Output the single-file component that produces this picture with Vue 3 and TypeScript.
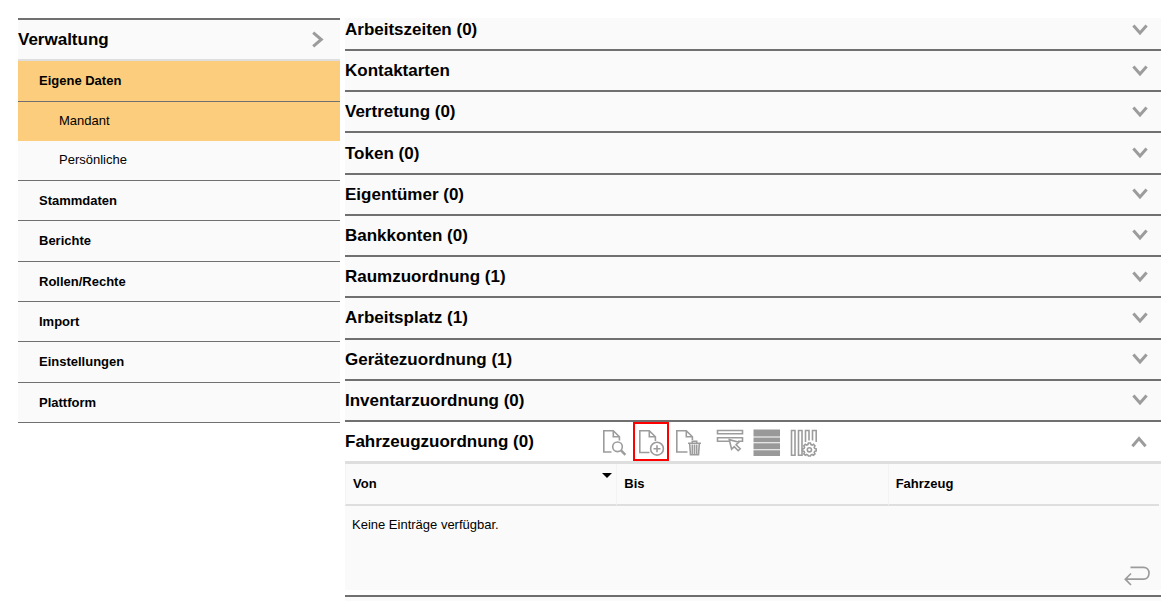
<script setup lang="ts">
import { ref } from 'vue'

interface Section {
  title: string
  count?: number
}

const subItems: string[] = ['Mandant', 'Persönliche']
const activeSub = ref('Mandant')

const navItems: string[] = [
  'Stammdaten',
  'Berichte',
  'Rollen/Rechte',
  'Import',
  'Einstellungen',
  'Plattform',
]

const firstSection: Section = { title: 'Arbeitszeiten', count: 0 }

const sections: Section[] = [
  { title: 'Kontaktarten' },
  { title: 'Vertretung', count: 0 },
  { title: 'Token', count: 0 },
  { title: 'Eigentümer', count: 0 },
  { title: 'Bankkonten', count: 0 },
  { title: 'Raumzuordnung', count: 1 },
  { title: 'Arbeitsplatz', count: 1 },
  { title: 'Gerätezuordnung', count: 1 },
  { title: 'Inventarzuordnung', count: 0 },
]

const label = (s: Section): string =>
  s.count === undefined ? s.title : `${s.title} (${s.count})`
</script>

<template>
  <div class="page">
    <nav class="sidebar" aria-label="Verwaltung">
      <button class="sidebar-head" type="button">
        <span>Verwaltung</span>
        <svg class="chevron-right" width="12" height="17" viewBox="0 0 12 17" aria-hidden="true">
          <path d="M1.2 1.6L9.3 8.5L1.2 15.4" />
        </svg>
      </button>
      <a class="nav-link active" href="#eigene-daten">Eigene Daten</a>
      <div class="sub">
        <a
          v-for="item in subItems"
          :key="item"
          class="sub-link"
          :class="{ active: item === activeSub }"
          href="#"
          @click.prevent="activeSub = item"
        >{{ item }}</a>
      </div>
      <div class="nav-list">
        <a v-for="item in navItems" :key="item" class="nav-link" href="#">{{ item }}</a>
      </div>
    </nav>

    <main class="content">
      <button class="section first" type="button">
        <span>{{ label(firstSection) }}</span>
        <svg class="chevron" width="16" height="12" viewBox="0 0 16 12" aria-hidden="true">
          <path d="M1.4 1.4L8 9L14.6 1.4" />
        </svg>
      </button>
      <div class="section-list">
        <button v-for="s in sections" :key="s.title" class="section" type="button">
          <span>{{ label(s) }}</span>
          <svg class="chevron" width="16" height="12" viewBox="0 0 16 12" aria-hidden="true">
            <path d="M1.4 1.4L8 9L14.6 1.4" />
          </svg>
        </button>
      </div>

      <section class="panel">
        <header class="panel-head">
          <h2>Fahrzeugzuordnung (0)</h2>
          <div class="toolbar">
            <div class="tool-group">
              <button class="tool" type="button" aria-label="Anzeigen">
                <svg width="36" height="39" viewBox="0 0 36 39">
                  <path d="M15.5 30H7.8V8.8H17.3L23.4 14.8V18.5M17.3 8.8V14.8H23.4" />
                  <circle cx="21.5" cy="24.8" r="4.8" />
                  <path class="thick" d="M25 28.4L29.4 32.8" />
                </svg>
              </button>
              <button class="tool marked" type="button" aria-label="Neu">
                <svg width="36" height="39" viewBox="0 0 36 39">
                  <path d="M16.5 30.5H6.8V8.8H16.3L22.4 14.8V19M16.3 8.8V14.8H22.4" />
                  <circle cx="24" cy="26.7" r="6.4" />
                  <path d="M24 23.2V30.2M20.5 26.7H27.5" />
                </svg>
              </button>
              <button class="tool" type="button" aria-label="Löschen">
                <svg width="36" height="39" viewBox="0 0 36 39">
                  <path d="M17.5 30H6.8V8.8H16.3L22.4 14.8V18M16.3 8.8V14.8H22.4" />
                  <path d="M18 21.3H31M22.3 21V19.3H26.7V21M19.7 22L20.5 32.8H28.5L29.3 22" />
                  <path d="M22.3 22.5V32M24.5 22.5V32M26.7 22.5V32" />
                </svg>
              </button>
            </div>
            <div class="tool-group">
              <button class="tool" type="button" aria-label="Auswählen">
                <svg width="36" height="39" viewBox="0 0 36 39">
                  <path d="M5.5 8.5H30.5V11.7H5.5ZM17.5 19.3H5.5V15.7H30.5V19.3H26" />
                  <path d="M17.3 17.7L19.6 27.2L22.2 24.6L26.2 28.7L28.2 26.7L24.1 22.7L26.8 20.2Z" />
                </svg>
              </button>
              <button class="tool" type="button" aria-label="Zeilen">
                <svg class="solid" width="36" height="39" viewBox="0 0 36 39">
                  <path d="M4.5 7.5H31V14.6H4.5ZM4.5 15.6H31V20.2H4.5ZM4.5 21.2H31V27.2H4.5ZM4.5 28.2H31V34H4.5Z" />
                </svg>
              </button>
              <button class="tool" type="button" aria-label="Spalten">
                <svg width="36" height="39" viewBox="0 0 36 39">
                  <path d="M5.5 8.5H9V33.2H5.5ZM12.5 8.5H16V33.2H12.5ZM19.5 20V8.5H23V18.5M26.5 18.5V8.5H30.2V20" />
                  <path d="M22.4 21H24.4L24.9 22.6L26.1 23.1L27.5 22.3L29 23.8L28.2 25.2L28.7 26.4L30.2 26.9V28.9L28.7 29.4L28.2 30.6L29 31.9L27.5 33.3L26.1 32.5L24.9 33L24.4 34H22.4L21.9 33L20.7 32.5L19.3 33.3L17.8 31.9L18.6 30.6L18.1 29.4L16.6 28.9V26.9L18.1 26.4L18.6 25.2L17.8 23.8L19.3 22.3L20.7 23.1L21.9 22.6Z" />
                  <circle cx="23.4" cy="27.8" r="2.1" />
                </svg>
              </button>
            </div>
          </div>
          <button class="toggle" type="button" aria-label="Zuklappen">
            <svg class="chevron" width="16" height="12" viewBox="0 0 16 12" aria-hidden="true">
              <path d="M1.4 10.2L8 2.6L14.6 10.2" />
            </svg>
          </button>
        </header>

        <div class="panel-body">
          <table>
            <thead>
              <tr>
                <th scope="col" aria-sort="descending">Von<span class="sort"></span></th>
                <th scope="col">Bis</th>
                <th scope="col">Fahrzeug</th>
              </tr>
            </thead>
            <tbody>
              <tr>
                <td colspan="3">Keine Einträge verfügbar.</td>
              </tr>
            </tbody>
          </table>
          <button class="back" type="button" aria-label="Zurück">
            <svg width="27" height="20" viewBox="0 0 27 20">
              <path d="M6.5 1.3H19.5C23 1.3 25 3.8 25 7C25 10.5 23 13.2 19.5 13.2H1.5M7 7.5L1.3 13.2L7 19" />
            </svg>
          </button>
        </div>
      </section>
      <div class="next-panel"></div>
    </main>
  </div>
</template>

<style>
body {
  margin: 0;
  background: #fff;
}
</style>

<style scoped>
.page {
  box-sizing: border-box;
  min-height: 100vh;
  padding: 18px 5px 0 18px;
  display: grid;
  grid-template-columns: 322px minmax(0, 1fr);
  gap: 5px;
  font-family: "Liberation Sans", Arial, sans-serif;
  font-size: 13px;
  color: #000;
}

button {
  margin: 0;
  padding: 0;
  border: 0;
  background: none;
  font: inherit;
  color: inherit;
  text-align: left;
  cursor: pointer;
}

svg {
  display: block;
  fill: none;
  stroke: #9c9c9c;
}

.sidebar {
  align-self: start;
  display: flex;
  flex-direction: column;
}

.sidebar-head {
  display: flex;
  align-items: center;
  justify-content: space-between;
  padding-right: 16px;
  border-top: 2px solid #707070;
  border-bottom: 2px solid #dedede;
  background: #fafafa;
  font-size: 17px;
  font-weight: bold;
  line-height: 39px;
}

.chevron-right {
  stroke-width: 3;
}

.nav-link {
  padding-left: 21px;
  border-bottom: 1px solid #707070;
  background: #fafafa;
  color: #000;
  font-weight: bold;
  line-height: 39px;
  text-decoration: none;
}

.sidebar > .nav-link {
  line-height: 40px;
}

.sub {
  display: flex;
  flex-direction: column;
  border-bottom: 1px solid #707070;
}

.sub-link {
  padding: 0 0 1px 41px;
  background: #fafafa;
  color: #000;
  line-height: 38px;
  text-decoration: none;
}

.nav-link.active,
.sub-link.active {
  background: #fbcd7c;
}

.nav-list {
  display: grid;
  grid-auto-rows: 1fr;
  min-height: 242px;
}

.content {
  display: flex;
  flex-direction: column;
}

.section-list {
  display: grid;
  grid-auto-rows: 1fr;
  min-height: 371px;
}

.section {
  display: flex;
  align-items: center;
  justify-content: space-between;
  padding-right: 13px;
  border-bottom: 2px solid #707070;
  background: #fafafa;
  font-size: 17px;
  font-weight: bold;
  line-height: 39px;
}

.section.first {
  padding-bottom: 8px;
  line-height: 23px;
}

.chevron {
  stroke-width: 3;
}

.panel-head {
  display: flex;
  align-items: center;
  border-bottom: 3px solid #dedede;
}

.panel-head h2 {
  flex: 0 0 251px;
  margin: 0;
  font-size: 17px;
  line-height: 39px;
}

.toolbar {
  display: flex;
  gap: 6px;
}

.tool-group {
  display: flex;
  gap: 1px;
}

.tool {
  position: relative;
}

.tool svg {
  stroke-width: 1.6;
}

.tool svg .thick {
  stroke-width: 2.4;
}

.tool svg.solid {
  fill: #999;
  stroke: none;
}

.tool.marked::after {
  content: "";
  position: absolute;
  inset: 0;
  border: 2px solid #ff0000;
}

.toggle {
  margin-left: auto;
  padding-right: 14px;
}

.panel-body {
  display: flex;
  flex-direction: column;
  padding-right: 2px;
  background: #fafafa;
}

table {
  width: 100%;
  table-layout: fixed;
  border-collapse: separate;
  border-spacing: 0;
}

th {
  position: relative;
  padding: 0 7px;
  border-left: 1px solid #f3f3f3;
  border-bottom: 2px solid #dedede;
  line-height: 40px;
  text-align: left;
}

.sort {
  position: absolute;
  top: 9px;
  right: 4px;
  border: 5px solid transparent;
  border-top-color: #000;
  border-bottom: 0;
}

td {
  padding: 0 7px;
  line-height: 38px;
}

.back {
  align-self: flex-end;
  margin: 22px 8px 4px 0;
}

.back svg {
  stroke-width: 1.7;
}

.next-panel {
  flex: 1;
  margin-top: 5px;
  border-top: 2px solid #707070;
  background: #fafafa;
}
</style>
